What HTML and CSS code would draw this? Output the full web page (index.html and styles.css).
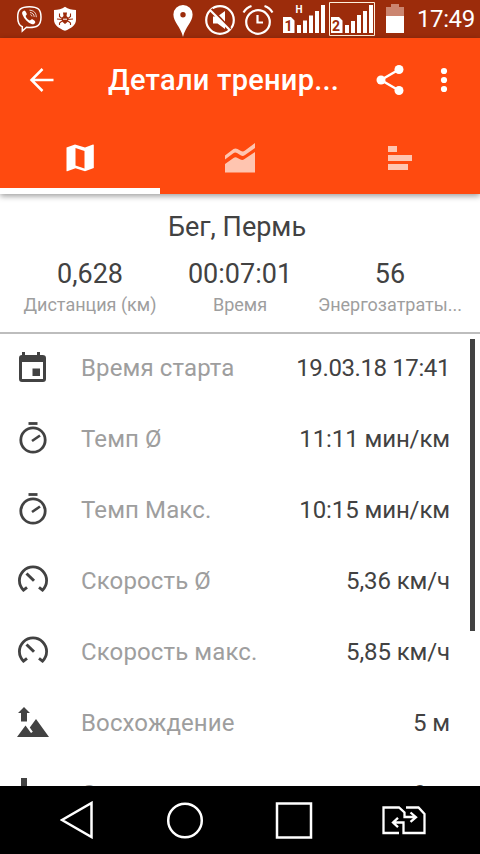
FILE: index.html
```html
<!DOCTYPE html>
<html lang="ru">
<head>
    <meta charset="UTF-8">
    <meta name="viewport" content="width=device-width, initial-scale=1.0">
    <title>Детали тренировки</title>
    <link rel="stylesheet" href="styles.css">
</head>
<body>
    <!-- Icons used more than once -->
    <svg class="symbols">
        <symbol id="stopwatch" viewBox="0 0 34 34">
            <path d="M12.500 2.500h9" fill="none" stroke="currentColor" stroke-width="2.800"/>
            <circle cx="17" cy="19" r="12.200" fill="none" stroke="currentColor" stroke-width="2.800"/>
            <path d="M16 20l8-5.500" fill="none" stroke="currentColor" stroke-width="2.600"/>
        </symbol>
        <symbol id="gauge" viewBox="0 0 34 34">
            <path d="M11 24.300L7.500 27.200A13.600 13.600 0 1 1 26.500 27.200L23 24.300" fill="none" stroke="currentColor" stroke-width="2.800"/>
            <path d="M10.500 10.500l7.500 7.300" fill="none" stroke="currentColor" stroke-width="3"/>
        </symbol>
    </svg>

    <div class="statusbar">
        <svg class="viber" width="28" height="38" viewBox="15 0 28 38">
            <path d="M29.500 6.700c-9 0-11.800 3-11.800 10.300 0 5.500 1 8.400 4.600 9.700v4.300l4.200-3.700c11 .7 14.500-2 14.500-10.300 0-7.500-3-10.300-11.500-10.300z" fill="none" stroke="#fff" stroke-width="1.500"/>
            <path d="M24.300 10.500c-2 .7-2.700 2.200-1.800 4.200 2 4.500 5 7.700 9.500 9.500 1.500.6 3-.8 3.300-2 .2-1-2.800-3.200-3.800-2.800l-1.700 1.200c-2-.8-3.500-2.500-4.200-4.500l1.200-1.600c.3-.9-1.500-3.800-2.500-4z" fill="#fff"/>
            <path d="M29.500 10.200c4.500.3 6.700 2.700 6.800 7M30 12.500c2.800.3 4 1.800 4.200 4.400M30.400 14.600c1 .2 1.500.8 1.600 1.800" fill="none" stroke="#fff" stroke-width=".8"/>
        </svg>
        <svg class="shield" width="24" height="38" viewBox="53 0 24 38">
            <path d="M65 6.700c3 2.200 7 3.200 11 3.300v10c0 5-5 8.500-11 10.800-6-2.300-11-5.800-11-10.800V10c4-.1 8-1.100 11-3.300z" fill="#fff"/>
            <path d="M63 12.500h4l-.5 3.500 1.500 1.500v4L65 24l-3-2.500v-4l1.500-1.500z" fill="#9c2c0b"/>
            <path d="M62 18.500l-2.500-2v-3M68 18.500l2.500-2v-3M62 19.500l-5-.5M68 19.500l5-.5M62 21l-2.500 2v2M68 21l2.500 2v2" fill="none" stroke="#9c2c0b" stroke-width="1.100"/>
            <path d="M63 19.200h4" stroke="#fff"/>
        </svg>
        <svg class="pin" width="20" height="38" viewBox="172.500 0 20 38">
            <path fill-rule="evenodd" d="M182.500 5a9.600 9.600 0 0 0-9.600 9.600c0 7.400 7.200 12.400 9.600 22.400 2.400-10 9.600-15 9.600-22.400a9.600 9.600 0 0 0-9.600-9.600zm0 7a2.700 2.700 0 1 1 0 5.400 2.700 2.700 0 0 1 0-5.400z" fill="#fff"/>
        </svg>
        <svg class="mute" width="32" height="38" viewBox="204 0 32 38">
            <circle cx="220" cy="20" r="13.800" fill="none" stroke="#fff" stroke-width="2.200"/>
            <path d="M213 16.500h4.500l7.500-5.500v18l-7.500-5.500H213z" fill="#fff"/>
            <path d="M211.500 9l19 20" stroke="#9c2c0b" stroke-width="2.500"/>
            <path d="M210 10l19.800 20" stroke="#fff" stroke-width="2.200"/>
        </svg>
        <svg class="alarm" width="32" height="38" viewBox="242 0 32 38">
            <circle cx="258" cy="22" r="11.800" fill="none" stroke="#fff" stroke-width="2.200"/>
            <path d="M257.500 15v7.500h5.500M243.500 12.500q3-5 8-6.500M272.500 12.500q-3-5-8-6.500" fill="none" stroke="#fff" stroke-width="2.200"/>
        </svg>
        <svg class="sim" width="43" height="38" viewBox="283 0 43 38">
            <path d="M283 17h8l3.500 3.500V33H283zM297 25h4v8h-4zM303 20.500h4V33h-4zM309 15.500h4V33h-4zM315 11h4v22h-4zM321 5h4v28h-4z" fill="#fff"/>
            <text x="284.500" y="30.500" class="sim-number">1</text>
            <text x="295.500" y="13" class="network">H</text>
        </svg>
        <svg class="sim" width="48" height="38" viewBox="328 0 48 38">
            <path d="M329.500 2.500h45v33h-45z" fill="none" stroke="#fff0dc"/>
            <path d="M331 17h8l3.500 3.500V33H331zM345 25h4v8h-4zM351 21h4v12h-4zM357 15h4v18h-4zM363 11h4v22h-4zM369 5h4v28h-4z" fill="#fff"/>
            <text x="332" y="30.500" class="sim-number">2</text>
        </svg>
        <svg class="battery" width="18" height="38" viewBox="386 0 18 38">
            <path d="M391 4h8v3h5v9h-18V7h5z" fill="#cb8570"/>
            <path d="M386 16h18v17h-18z" fill="#fff"/>
        </svg>
        <span class="clock">17:49</span>
    </div>

    <header class="appbar">
        <div class="toolbar">
            <svg class="back" width="26" height="26" viewBox="0 0 26 26">
                <path d="M24.500 13H3M13.500 2L2.500 13l11 11" fill="none" stroke="#fff" stroke-width="2.500"/>
            </svg>
            <h1>Детали тренир...</h1>
            <svg class="share" width="28" height="32" viewBox="0 0 28 32">
                <path d="M23 5.500L5 16l18 10.500" fill="none" stroke="#fff" stroke-width="2.500"/>
                <circle cx="23" cy="5.500" r="4.500" fill="#fff"/>
                <circle cx="5" cy="16" r="4.500" fill="#fff"/>
                <circle cx="23" cy="26.500" r="4.500" fill="#fff"/>
            </svg>
            <svg class="more" width="8" height="26" viewBox="0 0 8 26">
                <circle cx="4" cy="4" r="3.100" fill="#fff"/>
                <circle cx="4" cy="13" r="3.100" fill="#fff"/>
                <circle cx="4" cy="22" r="3.100" fill="#fff"/>
            </svg>
        </div>
        <nav class="tabs">
            <div class="tab active">
                <svg width="28" height="28" viewBox="0 0 28 28">
                    <path fill-rule="evenodd" d="M.5 3.500L9 .5l10 3L27 .500c.5-.1.800.100.800.500v23l-8.800 3.200-9.500-3L1.200 27.300c-.5.100-.7-.1-.7-.500zM9.500 4v17.500l9 3V7z" fill="#fff"/>
                </svg>
            </div>
            <div class="tab">
                <svg width="30" height="30" viewBox="0 0 30 30">
                    <path d="M0 12.500L8.500 6q2-1.200 4 0l3.500 2q2 1 4-.5L30 0v5L20 12q-2 1.500-4 .5l-4-2.500q-2-1-4 .500L0 16.500zM0 21l8.500-6q2-1.500 4 0l3 1.500q2 1 4-.5L30 9v20.500H0z" fill="#ffc5b0"/>
                </svg>
            </div>
            <div class="tab">
                <svg width="24" height="24" viewBox="0 0 24 24">
                    <path d="M0 0h9v6H0zM0 9h24v6H0zM0 18h20v6H0z" fill="#ffc5b0"/>
                </svg>
            </div>
        </nav>
    </header>

    <section class="summary">
        <h2>Бег, Пермь</h2>
        <div class="stats">
            <div class="stat">
                <div class="stat-value">0,628</div>
                <div class="stat-label">Дистанция (км)</div>
            </div>
            <div class="stat">
                <div class="stat-value">00:07:01</div>
                <div class="stat-label">Время</div>
            </div>
            <div class="stat">
                <div class="stat-value">56</div>
                <div class="stat-label">Энергозатраты...</div>
            </div>
        </div>
    </section>

    <main class="details">
        <div class="row">
            <svg class="icon" viewBox="0 0 34 34">
                <path fill-rule="evenodd" d="M6 2h3v3h12V2h3v3h2.500q3.500 0 3.500 3v21q0 3-3 3H6q-3 0-3-3V8q0-3 3-3zM6 12v17h21V12zM16.500 18.500H24V26h-7.500z" fill="currentColor"/>
            </svg>
            <span class="name">Время старта</span>
            <span class="value date">19.03.18 17:41</span>
        </div>
        <div class="row">
            <svg class="icon"><use href="#stopwatch"/></svg>
            <span class="name">Темп Ø</span>
            <span class="value">11:11 мин/км</span>
        </div>
        <div class="row">
            <svg class="icon"><use href="#stopwatch"/></svg>
            <span class="name">Темп Макс.</span>
            <span class="value">10:15 мин/км</span>
        </div>
        <div class="row">
            <svg class="icon"><use href="#gauge"/></svg>
            <span class="name">Скорость Ø</span>
            <span class="value">5,36 км/ч</span>
        </div>
        <div class="row">
            <svg class="icon"><use href="#gauge"/></svg>
            <span class="name">Скорость макс.</span>
            <span class="value">5,85 км/ч</span>
        </div>
        <div class="row">
            <svg class="icon" viewBox="0 0 34 34">
                <path d="M8 2l6 6h-3v8.500H5V8H2zM1 32l8.500-11.500 5.500 7.500 1.800-1.300-3-4.200L20 14l13 18z" fill="currentColor"/>
            </svg>
            <span class="name">Восхождение</span>
            <span class="value">5 м</span>
        </div>
        <div class="row">
            <svg class="icon" viewBox="0 0 34 34">
                <path d="M5 2h6v8.500h3l-6 6-6-6h3zM1 32l8.500-11.500 5.500 7.500 1.800-1.300-3-4.200L20 14l13 18z" fill="currentColor"/>
            </svg>
            <span class="name">Спуск</span>
            <span class="value">0 м</span>
        </div>
        <div class="scrollbar"></div>
    </main>

    <footer class="navbar">
        <svg class="nav-back" width="34" height="38" viewBox="0 0 34 38">
            <path d="M31.500 2v34L2 19z" fill="none" stroke="#fff" stroke-width="2.500"/>
        </svg>
        <svg class="nav-home" width="38" height="38" viewBox="0 0 38 38">
            <circle cx="19" cy="19.500" r="16.800" fill="none" stroke="#fff" stroke-width="2.500"/>
        </svg>
        <svg class="nav-recent" width="38" height="38" viewBox="0 0 38 38">
            <path d="M2 2.500h34v34H2z" fill="none" stroke="#fff" stroke-width="2.500"/>
        </svg>
        <svg class="nav-sim" width="44" height="30" viewBox="0 0 44 30">
            <path d="M17 28H1.500V2.500H17l5.500 5V12h11M28.500 7.500l5.500 4.700-5.500 4.700M24 2.500h12.500L42.500 9v19H21.500V17.500H11M16 12.800l-5 4.700 5 4.700" fill="none" stroke="#fff" stroke-width="2.300"/>
        </svg>
    </footer>
</body>
</html>
```
FILE: styles.css
```css
body {
    margin: 0;
    width: 480px;
    height: 854px;
    display: flex;
    flex-direction: column;
    overflow: hidden;
    background: #fff;
    color: #424242;
    font-family: Roboto, sans-serif;
}

h1, h2 {
    margin: 0;
}

svg {
    display: block;
    flex: none;
}

.symbols {
    position: absolute;
    width: 0;
    height: 0;
}

/* Android status bar */
.statusbar {
    display: flex;
    height: 38px;
    flex: none;
    background: #9c2c0b;
}

.viber { margin-left: 15px; }
.shield { margin-left: 10px; }
.pin { margin-left: 95.5px; }
.mute { margin-left: 11.5px; }
.alarm { margin-left: 6px; }
.sim { margin-left: 9px; }
.sim + .sim { margin-left: 2px; }
.battery { margin-left: 10px; }

.sim-number {
    font-size: 14px;
    font-weight: 700;
    fill: #9c2c0b;
}

.network {
    font-size: 10px;
    font-weight: 700;
    fill: #fff;
}

.clock {
    margin-left: 13px;
    color: #fff;
    font-size: 24px;
    letter-spacing: -0.4px;
    line-height: 39px;
}

/* App bar with tabs */
.appbar {
    height: 156px;
    flex: none;
    background: #ff4a0f;
    box-shadow: 0 2px 6px rgba(0, 0, 0, 0.4);
    z-index: 1;
}

.toolbar {
    display: flex;
    align-items: center;
    height: 84px;
    padding-left: 29px;
}

h1 {
    width: 267px;
    margin-left: 53px;
    color: #fff;
    font-size: 29px;
    font-weight: 500;
    letter-spacing: 0.25px;
    line-height: 34px;
    white-space: nowrap;
}

.share { margin-left: 1px; }
.more { margin-left: 36px; }

.tabs {
    display: flex;
    height: 72px;
}

.tab {
    display: flex;
    flex: 1;
    align-items: center;
    justify-content: center;
    height: 66px;
    border-bottom: 6px solid transparent;
}

.tab svg {
    margin-top: 6px;
}

.tab.active {
    border-color: #fff;
}

/* Summary */
.summary {
    height: 138px;
    flex: none;
    border-bottom: 2px solid #bdbdbd;
    text-align: center;
}

h2 {
    padding-top: 16px;
    padding-right: 6px;
    font-size: 27px;
    font-weight: 400;
    line-height: 34px;
}

.stats {
    display: flex;
    padding: 13px 15px 0;
}

.stat {
    width: 150px;
    white-space: nowrap;
}

.stat-value {
    font-size: 27px;
    line-height: 34px;
}

.stat-label {
    color: #9e9e9e;
    font-size: 18px;
    line-height: 28px;
}

/* Details list */
.details {
    position: relative;
    flex: 1;
    min-height: 0;
    overflow: hidden;
}

.row {
    display: flex;
    align-items: center;
    height: 68px;
    padding: 0 30px 3px 16px;
    font-size: 24px;
}

.icon {
    width: 34px;
    height: 34px;
    margin-bottom: 3px;
}

.name {
    margin-left: 31px;
    color: #9e9e9e;
    letter-spacing: 0.12px;
}

.value {
    margin-left: auto;
    letter-spacing: -0.1px;
}

.date {
    letter-spacing: -0.4px;
}

.scrollbar {
    position: absolute;
    top: 5px;
    right: 5px;
    width: 5px;
    height: 292px;
    background: #424242;
}

/* Navigation buttons */
.navbar {
    display: flex;
    align-items: center;
    height: 68px;
    flex: none;
    background: #000;
}

.nav-back { margin-left: 60px; }
.nav-home { margin-left: 72px; }
.nav-recent { margin-left: 71px; }
.nav-sim { margin-left: 69px; }
```
